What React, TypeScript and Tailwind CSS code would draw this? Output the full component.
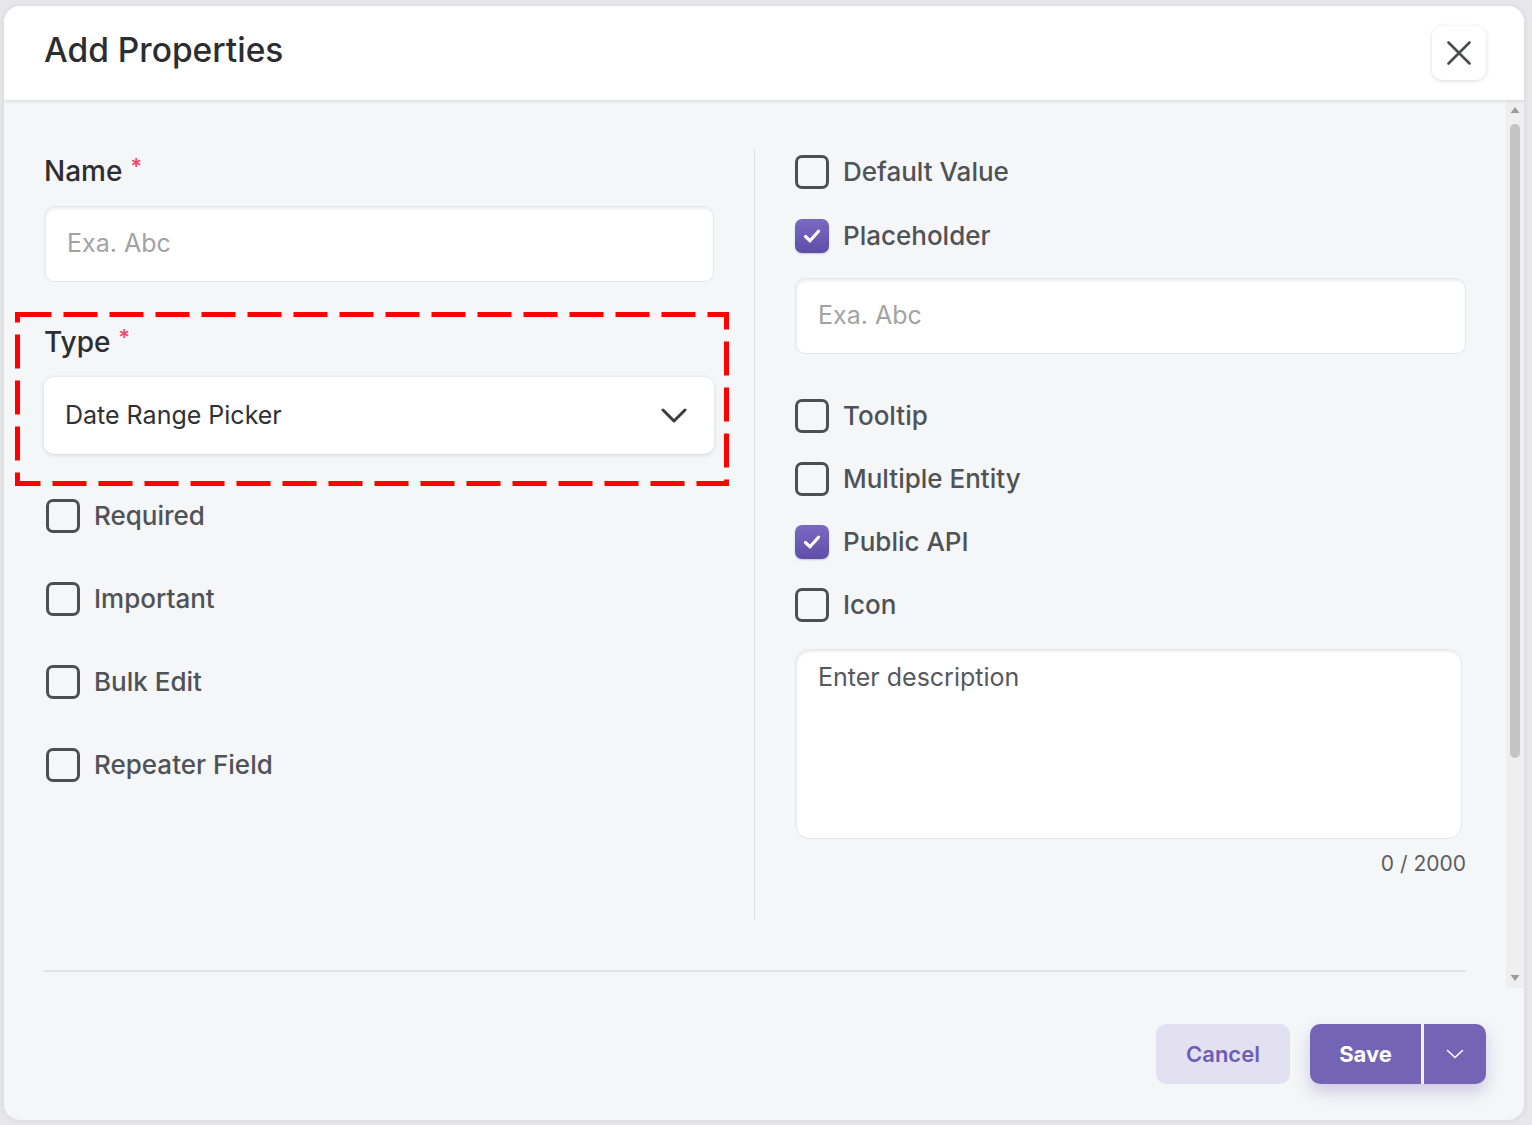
import React from 'react';

const font = { fontFamily: 'Inter, "Noto Sans", sans-serif' };

const CheckIcon = () => (
  <svg width="22" height="22" viewBox="0 0 22 22" fill="none">
    <path d="M4.5 11.5 L9 15.8 L17.5 6.2" stroke="white" strokeWidth="3.2" strokeLinecap="round" strokeLinejoin="round" />
  </svg>
);

const Checkbox: React.FC<{ label: string; checked?: boolean }> = ({ label, checked }) => (
  <div className="flex h-[34px] items-center gap-[14px]">
    {checked ? (
      <div className="flex h-[34px] w-[34px] items-center justify-center rounded-[7px] bg-gradient-to-b from-[#7b6ac4] to-[#5f4ea8] shadow-[0_1px_2px_rgba(0,0,0,0.2)]">
        <CheckIcon />
      </div>
    ) : (
      <div className="h-[34px] w-[34px] rounded-[7px] border-[3px] border-[#4b4e53]" />
    )}
    <span className="text-[26px] font-medium leading-[34px] text-[#4f5257]">{label}</span>
  </div>
);

const TextInput: React.FC<{ placeholder: string }> = ({ placeholder }) => (
  <div className="flex h-[76px] items-center rounded-[10px] border border-[#e6e6e6] bg-white pl-[22px] shadow-[inset_1px_2px_3px_rgba(0,0,0,0.07)]">
    <span className="text-[25px] text-[#a3a3a3]">{placeholder}</span>
  </div>
);

const Label: React.FC<{ text: string }> = ({ text }) => (
  <div className="flex h-[32px] items-start text-[28px] font-medium leading-[32px] text-[#2c2e32]">
    {text}
    <span className="ml-[8px] text-[22px] leading-[22px] text-[#f4406a]">*</span>
  </div>
);

export default function App() {
  return (
    <div className="min-h-screen bg-[#e7e7e9] pl-[4px] pt-[6px]" style={font}>
      <div className="flex h-[1114px] w-[1520px] flex-col overflow-hidden rounded-[16px] bg-[#f5f6f8] shadow-[0_0_6px_rgba(0,0,0,0.08)]">
        {/* header */}
        <div className="relative z-10 flex h-[94px] shrink-0 items-center justify-between bg-white pl-[40px] pr-[38px] shadow-[0_2px_3px_rgba(0,0,0,0.08)]">
          <h1 className="-mt-[5px] text-[33.5px] font-medium text-[#2b2d31]">Add Properties</h1>
          <button className="flex h-[54px] w-[54px] items-center justify-center rounded-[10px] bg-white shadow-[0_1px_4px_rgba(0,0,0,0.15)]">
            <svg width="24" height="24" viewBox="0 0 24 24" fill="none">
              <path d="M1.5 1.5 L22.5 22.5 M22.5 1.5 L1.5 22.5" stroke="#4a4b4e" strokeWidth="2.6" strokeLinecap="round" />
            </svg>
          </button>
        </div>

        {/* body */}
        <div className="flex h-[888px] shrink-0">
          <div className="flex flex-1 flex-col pl-[40px] pr-[40px] pt-[55px]">
            <div className="flex items-start">
              {/* left column */}
              <div className="flex w-[670px] flex-col">
                <Label text="Name" />
                <div className="mt-[19px]">
                  <TextInput placeholder="Exa. Abc" />
                </div>
                <div className="relative mt-[44px]">
                  <svg className="pointer-events-none absolute left-[-29px] top-[-14px]" width="714" height="174">
                    <rect x="2.5" y="2.5" width="709" height="169" fill="none" stroke="#ff0000" strokeWidth="5" strokeDasharray="34 12" />
                  </svg>
                  <Label text="Type" />
                  <div className="mt-[19px] flex h-[77px] items-center justify-between rounded-[10px] bg-white pl-[21px] pr-[27px] shadow-[0_1px_4px_rgba(0,0,0,0.14)]">
                    <span className="text-[25px] text-[#2f3134]">Date Range Picker</span>
                    <svg width="26" height="16" viewBox="0 0 26 16" fill="none">
                      <path d="M2 2 L13 13 L24 2" stroke="#3a3c40" strokeWidth="3" strokeLinecap="round" strokeLinejoin="round" />
                    </svg>
                  </div>
                </div>
                <div className="ml-[2px] mt-[45px] flex flex-col gap-[49px]">
                  <Checkbox label="Required" />
                  <Checkbox label="Important" />
                  <Checkbox label="Bulk Edit" />
                  <Checkbox label="Repeater Field" />
                </div>
              </div>

              {/* divider */}
              <div className="mx-[40px] -mt-[5px] h-[770px] w-px bg-[#dcdde1]" />

              {/* right column */}
              <div className="flex w-[671px] flex-col">
                <Checkbox label="Default Value" />
                <div className="mt-[30px]">
                  <Checkbox label="Placeholder" checked />
                </div>
                <div className="mt-[25px]">
                  <TextInput placeholder="Exa. Abc" />
                </div>
                <div className="mt-[45px] flex flex-col gap-[29px]">
                  <Checkbox label="Tooltip" />
                  <Checkbox label="Multiple Entity" />
                  <Checkbox label="Public API" checked />
                  <Checkbox label="Icon" />
                </div>
                <div className="mr-[4px] mt-[27px] h-[190px] rounded-[14px] border border-[#e6e6e6] bg-white px-[22px] pt-[9px] shadow-[inset_1px_2px_3px_rgba(0,0,0,0.07)]">
                  <span className="text-[25px] text-[#55585d]">Enter description</span>
                </div>
                <div className="mt-[9px] text-right text-[21px] text-[#5c5e62]">0 / 2000</div>
              </div>
            </div>
            <div className="mb-[16px] mt-auto h-[2px] bg-[#e1e2e5]" />
          </div>

          {/* scrollbar */}
          <div className="flex w-[18px] shrink-0 flex-col items-center bg-[#efeff0] pt-[6px]">
            <svg width="10" height="8" viewBox="0 0 10 8">
              <path d="M5 1 L9.5 7 L0.5 7 Z" fill="#9c9c9c" />
            </svg>
            <div className="mt-[10px] h-[634px] w-[10px] rounded-full bg-[#c4c4c4]" />
            <svg className="mt-auto mb-[6px]" width="10" height="8" viewBox="0 0 10 8">
              <path d="M5 7 L9.5 1 L0.5 1 Z" fill="#9c9c9c" />
            </svg>
          </div>
        </div>

        {/* footer */}
        <div className="flex flex-1 items-start justify-end gap-[20px] pr-[38px] pt-[36px]">
          <button className="h-[60px] w-[134px] rounded-[10px] bg-[#e3e0f2] text-[22px] font-semibold text-[#6e5eb3]">
            Cancel
          </button>
          <div className="flex h-[60px] overflow-hidden rounded-[10px] shadow-[0_8px_16px_rgba(116,100,182,0.3)]">
            <button className="w-[111px] bg-[#7464b6] text-[22px] font-bold text-white">Save</button>
            <div className="w-[3px] bg-[#f3f1fa]" />
            <button className="flex w-[62px] items-center justify-center bg-[#7464b6]">
              <svg width="18" height="10" viewBox="0 0 18 10" fill="none">
                <path d="M1.5 1.5 L9 8.5 L16.5 1.5" stroke="white" strokeWidth="1.6" strokeLinecap="round" strokeLinejoin="round" />
              </svg>
            </button>
          </div>
        </div>
      </div>
    </div>
  );
}
